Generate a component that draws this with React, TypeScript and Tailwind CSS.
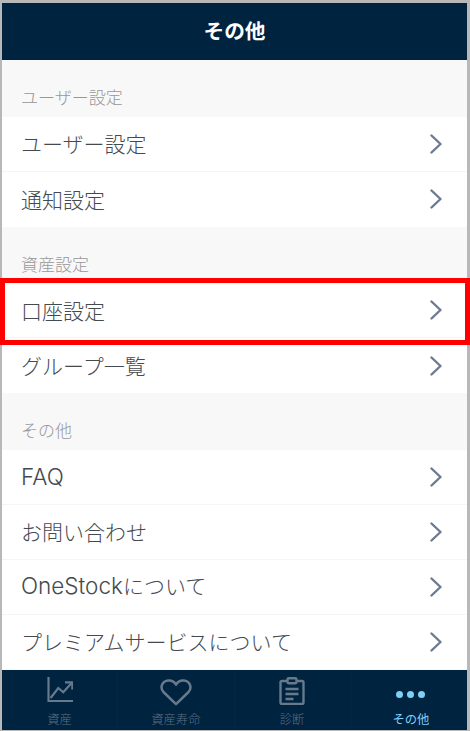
import React from 'react';

const font = 'font-["Noto_Sans_CJK_JP","Noto_Sans",sans-serif]';

const sections = [
  { title: 'ユーザー設定', rows: ['ユーザー設定', '通知設定'] },
  { title: '資産設定', rows: ['口座設定', 'グループ一覧'] },
  { title: 'その他', rows: ['FAQ', 'お問い合わせ', 'OneStockについて', 'プレミアムサービスについて'] },
];

const Chevron = () => (
  <svg width="12" height="20" viewBox="0 0 12 20" fill="none" stroke="#6b7a90" strokeWidth="2.400" strokeLinecap="round" strokeLinejoin="round">
    <path d="M1.500 1.500L10.500 10L1.500 18.500" />
  </svg>
);

const ChartIcon = () => (
  <svg width="26" height="26" viewBox="0 0 26 26" fill="none" stroke="currentColor" strokeWidth="2.200">
    <path d="M1.500 0v24h24.500" />
    <path d="M3.600 21L11.300 11l5 4.300L24.600 6" />
    <path d="M18 5.300h7.300v7.300" />
  </svg>
);

const HeartIcon = () => (
  <svg className="mt-[2px]" width="32" height="27" viewBox="0 0 33 28" fill="none" stroke="currentColor" strokeWidth="2.600">
    <path d="M16.500 26L3.500 13.500C-0.500 9 2 2 8.500 1.500c4-.3 6.500 1.500 8 4.500 1.500-3 4-4.800 8-4.500C31 2 33.500 9 29.500 13.500z" strokeLinejoin="round" />
  </svg>
);

const ClipboardIcon = () => (
  <svg width="26" height="28" viewBox="0 0 26 28" fill="none" stroke="currentColor" strokeWidth="2.400">
    <path d="M8 4H3a1.500 1.500 0 0 0-1.500 1.500v20A1.500 1.500 0 0 0 3 27h20a1.500 1.500 0 0 0 1.500-1.500v-20A1.500 1.500 0 0 0 23 4h-5" />
    <rect x="8.500" y="1.200" width="9" height="5" rx="1.200" />
    <path d="M6.500 12h13M6.500 17h13M6.500 22h8" />
  </svg>
);

const Label = ({ text }: { text: string }) => (
  <span className="text-[21px] leading-none font-light text-[#454a50]">
    {text.split(/([A-Za-z]+)/).map((part, i) =>
      /[A-Za-z]/.test(part) ? (
        <span key={i} className='font-["Inter",sans-serif] text-[22.500px] font-light'>{part}</span>
      ) : (
        part
      ),
    )}
  </span>
);

const Row = ({ label, highlighted }: { label: string; highlighted: boolean }) => (
  <div className="relative flex h-[54.800px] items-center justify-between border-b border-[#f5f5f5] bg-white pr-[25px] pl-[19px] last:border-b-0">
    <Label text={label} />
    <Chevron />
    {highlighted && <div className="absolute top-[-5.600px] right-[-3px] bottom-[-7.600px] left-[-2px] z-10 border-[5px] border-[#ff0000]" />}
  </div>
);

const tabs = [
  { label: '資産', icon: <ChartIcon /> },
  { label: '資産寿命', icon: <HeartIcon /> },
  { label: '診断', icon: <ClipboardIcon /> },
];

export default function App() {
  return (
    <div className={`flex h-[731px] w-[470px] flex-col border-t-[3px] border-r-[3px] border-b-[1px] border-l-[2px] border-[#b8b8b8] bg-[#f8f8f8] ${font}`}>
      <header className="flex h-[57px] shrink-0 items-center justify-center bg-[#00233f]">
        <h1 className="-translate-y-[1px] text-[20.700px] font-bold text-white">その他</h1>
      </header>

      <main className="flex-1">
        {sections.map(section => (
          <section key={section.title}>
            <div className="flex h-[57px] items-end pb-[12px] pl-[19px] text-[17px] leading-none font-light text-[#979797]">
              {section.title}
            </div>
            {section.rows.map(row => (
              <Row key={row} label={row} highlighted={row === '口座設定'} />
            ))}
          </section>
        ))}
      </main>

      <nav className="grid h-[60px] shrink-0 grid-cols-4 bg-[#00233f]">
        {tabs.map(tab => (
          <div key={tab.label} className="flex flex-col items-center justify-between border-r border-[#032843] pt-[7px] pb-[5px] text-[#667a8c]">
            {tab.icon}
            <span className="text-[12.300px] leading-none font-light text-[#5c6f82]">{tab.label}</span>
          </div>
        ))}
        <div className="flex flex-col items-center justify-end pb-[5px] pl-[4px] text-[#7fd0f7]">
          <div className="mb-[15px] flex gap-[4px]">
            <span className="h-[7px] w-[7px] rounded-full bg-[#7fd0f7]" />
            <span className="h-[7px] w-[7px] rounded-full bg-[#7fd0f7]" />
            <span className="h-[7px] w-[7px] rounded-full bg-[#7fd0f7]" />
          </div>
          <span className="text-[12.300px] leading-none">その他</span>
        </div>
      </nav>
    </div>
  );
}
